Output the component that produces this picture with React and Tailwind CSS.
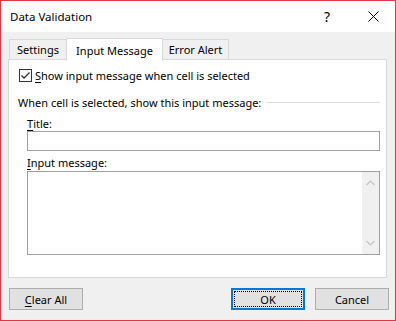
import React from "react";

const font = { fontFamily: '"Noto Sans", "Segoe UI", sans-serif' };

function Mn({ c, rest }) {
  return (
    <span>
      <span className="underline underline-offset-2">{c}</span>
      {rest}
    </span>
  );
}

function Btn({ children, primary }) {
  return (
    <button
      type="button"
      className={
        primary
          ? "w-[74px] h-[22px] bg-[#e1e1e1] border-2 border-[#0078d7] flex items-center justify-center p-[1px]"
          : "w-[74px] h-[22px] bg-[#e1e1e1] border border-[#adadad] flex items-center justify-center"
      }
    >
      {primary ? (
        <span className="w-full h-full border border-dotted border-black flex items-center justify-center">
          {children}
        </span>
      ) : (
        children
      )}
    </button>
  );
}

export default function App() {
  return (
    <div
      className="w-[396px] h-[321px] border border-[#e0363f] flex flex-col text-[11px] text-black bg-[#f0f0f0] leading-none"
      style={font}
    >
      {/* title bar */}
      <div className="h-[31px] bg-white flex items-center shrink-0">
        <span className="pl-[9px] text-[11.5px]">Data Validation</span>
        <span className="ml-auto mr-[38px] text-[14px]">?</span>
        <svg width="11" height="11" viewBox="0 0 11 11" className="mr-[16px]">
          <path d="M0.5 0.5L10.5 10.5M10.5 0.5L0.5 10.5" stroke="#000" strokeWidth="1" />
        </svg>
      </div>

      <div className="flex-1 flex flex-col px-[7px] pt-[6px]">
        {/* tabs */}
        <div className="flex items-end h-[22px] pl-[1px] relative z-10">
          <div className="w-[58px] h-[20px] border border-b-0 border-[#d9d9d9] flex items-center justify-center mb-[1px]">
            Settings
          </div>
          <div className="w-[97px] h-[23px] border border-b-0 border-[#d9d9d9] bg-white flex items-center justify-center -mb-[1px] -ml-px">
            Input Message
          </div>
          <div className="w-[67px] h-[20px] border border-b-0 border-[#d9d9d9] flex items-center justify-center mb-[1px] -ml-px">
            Error Alert
          </div>
        </div>

        {/* panel */}
        <div className="w-[379px] h-[219px] -mt-[1px] border border-[#d9d9d9] bg-white flex flex-col pl-[9px]">
          <div className="flex items-center mt-[9px] ml-[1px] h-[13px]">
            <span className="w-[13px] h-[13px] border border-[#333] bg-white flex items-center justify-center">
              <svg width="11" height="11" viewBox="0 0 11 11">
                <path d="M1.5 5.5L4 8L9.5 2.5" fill="none" stroke="#333" strokeWidth="1.3" />
              </svg>
            </span>
            <span className="ml-[3px]">
              <Mn c="S" rest="how input message when cell is selected" />
            </span>
          </div>

          <div className="flex items-center mt-[13px] h-[14px]">
            <span className="whitespace-nowrap">When cell is selected, show this input message:</span>
            <span className="flex-1 h-px bg-[#dcdcdc] ml-[6px] mr-[6px]" />
          </div>

          <div className="ml-[9px] mt-[8px] h-[12px] flex items-center">
            <Mn c="T" rest="itle:" />
          </div>
          <div className="ml-[9px] mt-[2px] w-[353px] h-[20px] border border-[#a0a0a0] bg-white" />

          <div className="ml-[9px] mt-[5px] h-[12px] flex items-center">
            <Mn c="I" rest="nput message:" />
          </div>
          <div className="ml-[9px] mt-[3px] w-[353px] h-[84px] border border-[#a0a0a0] bg-white flex justify-end">
            <div className="w-[17px] h-full bg-[#f0f0f0] flex flex-col items-center justify-between py-[8px]">
              <svg width="9" height="6" viewBox="0 0 9 6">
                <path d="M0.5 5L4.5 1L8.5 5" fill="none" stroke="#c2c2c2" strokeWidth="1.2" />
              </svg>
              <svg width="9" height="6" viewBox="0 0 9 6">
                <path d="M0.5 1L4.5 5L8.5 1" fill="none" stroke="#c2c2c2" strokeWidth="1.2" />
              </svg>
            </div>
          </div>
        </div>

        {/* buttons */}
        <div className="flex items-center mt-[10px]">
          <div className="ml-[1px]">
            <Btn>
              <Mn c="C" rest="lear All" />
            </Btn>
          </div>
          <div className="ml-auto flex gap-[10px] mr-[-1px]">
            <Btn primary>OK</Btn>
            <Btn>Cancel</Btn>
          </div>
        </div>
      </div>
    </div>
  );
}
